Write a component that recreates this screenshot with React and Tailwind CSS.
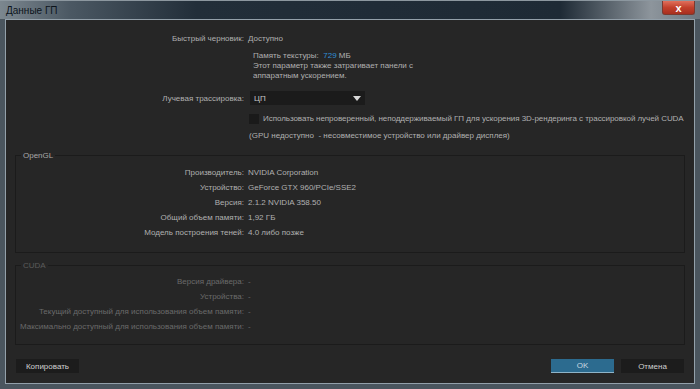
import React from "react";

const font = { fontFamily: '"Liberation Sans", Arial, sans-serif' };

function Row({ label, value, labelW, dim }) {
  return (
    <div className={`flex items-center h-[15px] whitespace-nowrap ${dim ? "text-[#6a6a6a]" : "text-[#b0b0b0]"}`}>
      <div className="flex justify-end shrink-0" style={{ width: labelW }}>
        <span>{label}</span>
      </div>
      <div className="ml-[4px]">{value}</div>
    </div>
  );
}

export default function App() {
  return (
    <div
      className="w-[700px] h-[389px] bg-[#4a555e] flex flex-col text-[8px] leading-[11px] overflow-hidden"
      style={font}
    >
      {/* Title bar */}
      <div className="h-[19px] shrink-0 flex items-start bg-[linear-gradient(90deg,#7c878f_0%,#4b5863_10%,#222e39_28%,#1e2a35_80%,#8d959c_93%,#6d7780_100%)] border-t border-[#8c979f]">
        <div className="ml-[6px] mt-[3px] text-[10px] leading-[13px] text-[#0c141c]">Данные ГП</div>
        <div className="ml-auto mr-[5px] w-[33px] h-[14px] rounded-b-[3px] border border-t-0 border-[#7a3a30] bg-[linear-gradient(180deg,#e0705c_0%,#c2402c_50%,#a82f1e_100%)] flex items-center justify-center text-white text-[11px] font-bold leading-[12px]">
          x
        </div>
      </div>
      {/* Content */}
      <div className="flex-1 mx-[5px] mb-[5px] border border-[#93a0aa] bg-[#262626] flex flex-col pt-[11px] whitespace-nowrap">
        <Row label="Быстрый черновик:" value="Доступно" labelW={238} />
        <div className="ml-[247px] mt-[3px] text-[#b0b0b0]">
          <div className="h-[12px] flex items-center">
            <span>Память текстуры:&nbsp;&nbsp;</span>
            <span className="text-[#2f8fd8]">729</span>
            <span>&nbsp;МБ</span>
          </div>
          <div className="leading-[10px] mt-[0px]">
            Этот параметр также затрагивает панели с<br />аппаратным ускорением.
          </div>
        </div>
        <div className="flex items-center mt-[10px] text-[#b0b0b0]">
          <div className="w-[238px] text-right">Лучевая трассировка:</div>
          <div className="ml-[6px] w-[115px] h-[14px] bg-[#1b1b1b] flex items-center pl-[4px] pr-[4px] text-[#c8c8c8]">
            <span>ЦП</span>
            <svg className="ml-auto" width="8" height="5" viewBox="0 0 8 5">
              <path d="M0 0 H8 L4 5 Z" fill="#d8d8d8" />
            </svg>
          </div>
        </div>
        <div className="flex items-center mt-[8px] ml-[243px] text-[#b0b0b0]">
          <div className="w-[10px] h-[10px] bg-[#1a1a1a]" />
          <div className="ml-[4px] tracking-[-0.05px]">
            Использовать непроверенный, неподдерживаемый ГП для ускорения 3D-рендеринга с трассировкой лучей CUDA
          </div>
        </div>
        <div className="ml-[243px] mt-[6px] text-[#b0b0b0]">
          (GPU недоступно&nbsp; - несовместимое устройство или драйвер дисплея)
        </div>

        <fieldset className="mx-[9px] mt-[9px] border border-[#1b1b1b] pb-[12px] pt-[4px]">
          <legend className="ml-[5px] px-[2px] text-[#a8a8a8] leading-[11px]">OpenGL</legend>
          <Row label="Производитель:" value="NVIDIA Corporation" labelW={228} />
          <Row label="Устройство:" value="GeForce GTX 960/PCIe/SSE2" labelW={228} />
          <Row label="Версия:" value="2.1.2 NVIDIA 358.50" labelW={228} />
          <Row label="Общий объем памяти:" value="1,92 ГБ" labelW={228} />
          <Row label="Модель построения теней:" value="4.0 либо позже" labelW={228} />
        </fieldset>

        <fieldset className="mx-[9px] mt-[7px] border border-[#1b1b1b] pb-[10px] pt-[3px]">
          <legend className="ml-[5px] px-[2px] text-[#5c5c5c] leading-[11px]">CUDA</legend>
          <Row dim label="Версия драйвера:" value="-" labelW={228} />
          <Row dim label="Устройства:" value="-" labelW={228} />
          <Row dim label="Текущий доступный для использования объем памяти:" value="-" labelW={228} />
          <Row dim label="Максимально доступный для использования объем памяти:" value="-" labelW={228} />
        </fieldset>

        <div className="flex mt-auto mb-[10px] px-[10px] items-center">
          <div className="w-[63px] h-[14px] bg-[#1c1c1c] text-[#d0d0d0] flex items-center justify-center">Копировать</div>
          <div className="ml-auto w-[63px] h-[14px] bg-[#2c6b8f] border-b border-[#8fb4c8] text-[#c8d8e0] flex items-center justify-center">OK</div>
          <div className="ml-[7px] w-[63px] h-[14px] bg-[#1c1c1c] text-[#d0d0d0] flex items-center justify-center">Отмена</div>
        </div>
      </div>
    </div>
  );
}
